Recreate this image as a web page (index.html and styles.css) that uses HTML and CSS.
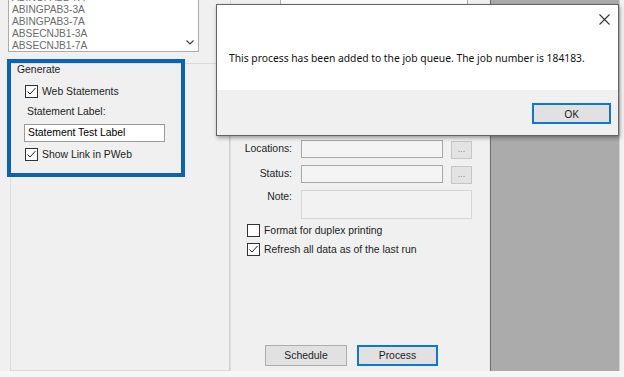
FILE: index.html
```html
<!DOCTYPE html>
<html lang="en">
<head>
    <meta charset="UTF-8">
    <meta name="viewport" content="width=device-width, initial-scale=1.0">
    <title>Statements - Job Queue</title>
    <link rel="stylesheet" href="styles.css">
</head>
<body>
    <div class="screen">
        <div class="left">
            <div class="listbox">
                <div class="item">ABINGPAB2-7A</div>
                <div class="item">ABINGPAB3-3A</div>
                <div class="item">ABINGPAB3-7A</div>
                <div class="item">ABSECNJB1-3A</div>
                <div class="item">ABSECNJB1-7A</div>
                <svg class="chevron" width="8" height="5" viewBox="0 0 8 5"><path d="M0.5 0.5 L4 4 L7.5 0.5" fill="none" stroke="#444" stroke-width="1.2"/></svg>
            </div>
            <div class="lower">
                <div class="generate">
                    <div class="group-title">Generate</div>
                    <label class="check first">
                        <span class="box"><svg width="11" height="11" viewBox="0 0 11 11"><path d="M1.5 5.5 L4 8 L9.5 2" fill="none" stroke="#222" stroke-width="1"/></svg></span>
                        Web Statements
                    </label>
                    <div class="field-label">Statement Label:</div>
                    <div class="textbox">Statement Test Label</div>
                    <label class="check">
                        <span class="box"><svg width="11" height="11" viewBox="0 0 11 11"><path d="M1.5 5.5 L4 8 L9.5 2" fill="none" stroke="#222" stroke-width="1"/></svg></span>
                        Show Link in PWeb
                    </label>
                </div>
            </div>
        </div>

        <div class="middle">
            <div class="top-field"></div>
            <div class="form-grid">
                <div class="lbl">Locations:</div>
                <div class="input"></div>
                <div class="dots">...</div>
                <div class="lbl">Status:</div>
                <div class="input"></div>
                <div class="dots">...</div>
                <div class="lbl lbl-top">Note:</div>
                <div class="note"></div>
            </div>
            <div class="options">
                <label class="check">
                    <span class="box"></span>
                    Format for duplex printing
                </label>
                <label class="check">
                    <span class="box"><svg width="11" height="11" viewBox="0 0 11 11"><path d="M1.5 5.5 L4 8 L9.5 2" fill="none" stroke="#222" stroke-width="1"/></svg></span>
                    Refresh all data as of the last run
                </label>
            </div>
            <div class="actions">
                <button class="btn">Schedule</button>
                <button class="btn btn-default">Process</button>
            </div>
        </div>

        <div class="preview"></div>
        <div class="edge"></div>
    </div>

    <div class="dialog">
        <div class="dialog-body">
            <svg class="close" width="11" height="11" viewBox="0 0 11 11"><path d="M0.5 0.5 L10.5 10.5 M10.5 0.5 L0.5 10.5" stroke="#333" stroke-width="1.1"/></svg>
            <p class="message">This process has been added to the job queue. The job number is 184183.</p>
        </div>
        <div class="dialog-footer">
            <button class="btn btn-ok">OK</button>
        </div>
    </div>
</body>
</html>
```

FILE: styles.css
```css
body {
    margin: 0;
    width: 624px;
    height: 377px;
    overflow: hidden;
    background: #f6f6f6;
    font-family: "Liberation Sans", Arial, sans-serif;
    font-size: 10.4px;
    color: #1e1e1e;
    position: relative;
}
.screen {
    display: flex;
    height: 371px;
    background: #f0f0f0;
}

/* left column */
.left {
    width: 230px;
    display: flex;
    flex-direction: column;
}
.listbox {
    position: relative;
    margin: -9px 0 0 8px;
    width: 186px;
    height: 59px;
    border: 1px solid #acacac;
    background: #fff;
    padding-left: 3px;
    box-sizing: content-box;
}
.item {
    line-height: 12px;
    color: #6b6b6b;
    font-size: 10.2px;
}
.chevron {
    position: absolute;
    right: 4px;
    bottom: 6px;
}
.lower {
    margin: 11px 0 0 10px;
    flex: 1;
    border: 1px solid #dadada;
    border-right-color: #d0d0d0;
}
.generate {
    margin: -5px 0 0 -4px;
    width: 164px;
    height: 109px;
    border: 4px solid #0a64b5;
    padding: 1px 0 0 6px;
}
.group-title {
    line-height: 12px;
}
.check {
    display: flex;
    align-items: center;
    gap: 4px;
    height: 13px;
}
.box {
    width: 11px;
    height: 11px;
    border: 1px solid #333;
    background: #fff;
    display: flex;
}
.generate .check {
    margin-left: 8px;
}
.generate .first {
    margin-top: 9px;
}
.field-label {
    margin: 8px 0 0 10px;
    line-height: 12px;
}
.textbox {
    margin: 6px 0 0 7px;
    width: 136px;
    height: 16px;
    border: 1px solid #9a9a9a;
    background: #fff;
    color: #000;
    padding-left: 3px;
    line-height: 16px;
    box-sizing: content-box;
}
.generate .textbox + .check {
    margin-top: 6px;
}

/* middle column */
.middle {
    width: 258px;
    display: flex;
    flex-direction: column;
    border-left: 1px solid #dcdcdc;
    border-right: 1px solid #e6e6e6;
}
.top-field {
    margin: -10px 0 0 49px;
    width: 186px;
    height: 14px;
    border: 1px solid #acacac;
    background: #fbfbfb;
}
.form-grid {
    margin-top: 134px;
    display: grid;
    grid-template-columns: 70px 142px 29px;
    grid-auto-rows: 18px;
    row-gap: 7px;
}
.lbl {
    text-align: right;
    padding-right: 9px;
    line-height: 18px;
}
.lbl-top {
    line-height: 14px;
}
.input {
    border: 1px solid #a8a8a8;
    background: #f4f4f4;
}
.dots {
    margin-left: 8px;
    border: 1px solid #c6c6c6;
    background: #e3e3e3;
    color: #8a8a8a;
    font-size: 9px;
    text-align: center;
    line-height: 14px;
    height: 16px;
    margin-top: 1px;
}
.note {
    grid-column: 2 / 4;
    height: 27px;
    border: 1px solid #d6d6d6;
    background: #f2f2f2;
}
.form-grid .note {
    grid-row: 3 / 4;
    align-self: start;
}
.options {
    margin: 16px 0 0 16px;
    display: flex;
    flex-direction: column;
    gap: 6px;
}
.actions {
    margin: auto 0 5px 34px;
    display: flex;
    gap: 10px;
}
.btn {
    font-family: "Liberation Sans", Arial, sans-serif;
    font-size: 10.4px;
    color: #1e1e1e;
    width: 82px;
    height: 21px;
    padding: 0;
    border: 1px solid #adadad;
    background: #e1e1e1;
}
.btn-default {
    width: 81px;
    border: 2px solid #0c78d4;
}

/* right side */
.preview {
    width: 128px;
    background: #ababab;
    border-left: 1px solid #6f6f6f;
}
.edge {
    flex: 1;
    border-left: 1px solid #d2d2d2;
    background: #f2f2f2;
}

/* message box */
.dialog {
    position: absolute;
    left: 216px;
    top: 4px;
    width: 401px;
    height: 130px;
    border: 1px solid #646464;
    box-shadow: 1px 2px 4px rgba(0, 0, 0, 0.35);
    display: flex;
    flex-direction: column;
    font-family: "Noto Sans", "Open Sans", sans-serif;
}
.dialog-body {
    position: relative;
    height: 85px;
    background: #fff;
}
.close {
    position: absolute;
    right: 8px;
    top: 9px;
}
.message {
    margin: 46px 0 0 12px;
    font-size: 10.3px;
    line-height: 14px;
    color: #111;
}
.dialog-footer {
    flex: 1;
    background: #f0f0f0;
    display: flex;
    justify-content: flex-end;
    align-items: flex-start;
    padding: 13px 7px 0 0;
}
.btn-ok {
    width: 79px;
    height: 21px;
    border: 2px solid #0c78d4;
    font-family: "Noto Sans", "Open Sans", sans-serif;
    font-size: 10.5px;
}
```
